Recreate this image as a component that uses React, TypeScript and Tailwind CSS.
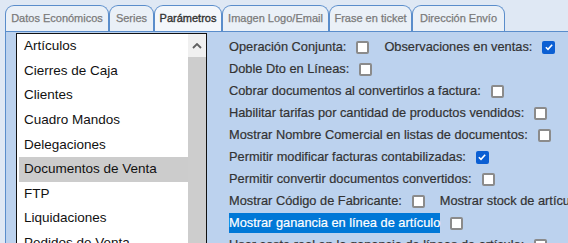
import React from "react";

const tabs = [
  { label: "Datos Económicos", w: "w-[104px]" },
  { label: "Series", w: "w-[45px]" },
  { label: "Parámetros", w: "w-[68px]", active: true },
  { label: "Imagen Logo/Email", w: "w-[107px]" },
  { label: "Frase en ticket", w: "w-[83px]" },
  { label: "Dirección Envío", w: "w-[93px]" },
];

const sections = [
  "Artículos",
  "Cierres de Caja",
  "Clientes",
  "Cuadro Mandos",
  "Delegaciones",
  "Documentos de Venta",
  "FTP",
  "Liquidaciones",
  "Pedidos de Venta",
  "Proveedores",
];

type Opt = { label: string; checked?: boolean; selected?: boolean };

const rows: Opt[][] = [
  [{ label: "Operación Conjunta:" }, { label: "Observaciones en ventas:", checked: true }],
  [{ label: "Doble Dto en Líneas:" }],
  [{ label: "Cobrar documentos al convertirlos a factura:" }],
  [{ label: "Habilitar tarifas por cantidad de productos vendidos:" }],
  [{ label: "Mostrar Nombre Comercial en listas de documentos:" }],
  [{ label: "Permitir modificar facturas contabilizadas:", checked: true }],
  [{ label: "Permitir convertir documentos convertidos:" }],
  [{ label: "Mostrar Código de Fabricante:" }, { label: "Mostrar stock de artículos en ventas:" }],
  [{ label: "Mostrar ganancia en línea de artículo", selected: true }],
  [{ label: "Usar coste real en la ganancia de líneas de artículo:" }],
];

const Checkbox = ({ checked }: { checked?: boolean }) =>
  checked ? (
    <span className="ml-[10px] flex h-[13px] w-[13px] shrink-0 items-center justify-center rounded-[2px] bg-[#0b5fd3]">
      <svg viewBox="0 0 12 12" className="h-[10px] w-[10px]">
        <path d="M2.2 6.3 L4.8 8.8 L9.8 3.2" fill="none" stroke="white" strokeWidth="1.9" />
      </svg>
    </span>
  ) : (
    <span className="ml-[10px] h-[13px] w-[13px] shrink-0 rounded-[2px] border-2 border-[#8b8b8b] bg-white" />
  );

export default function App() {
  return (
    <div
      className="h-[243px] w-[568px] overflow-hidden bg-[#dfe8f4] pl-[5px] pt-[5px]"
      style={{ fontFamily: '"Liberation Sans", Arial, sans-serif' }}
    >
      {/* tab strip */}
      <div className="flex h-[26px]">
        {tabs.map((t) => (
          <div
            key={t.label}
            className={
              "flex shrink-0 items-center justify-center whitespace-nowrap rounded-t-[9px] border border-b-0 border-[#5a8dcb] text-[11px] " +
              t.w +
              " " +
              (t.active ? "bg-[#f4f7fb] text-[#333]" : "bg-[#eaf0f7] text-[#7a7a7a]")
            }
            style={{ WebkitTextStroke: t.active ? "0.35px #333" : "0.25px #7a7a7a" }}
          >
            {t.label}
          </div>
        ))}
      </div>

      {/* panel */}
      <div className="flex h-[300px] border-l border-t border-[#5a8dcb] bg-[#bcd2ee]">
        {/* list box */}
        <div className="ml-[10px] mt-[1px] flex h-[300px] w-[191px] shrink-0 border border-[#111] bg-white">
          <div className="flex-1">
            {sections.map((s) => (
              <div
                key={s}
                className={
                  "flex h-[24.6px] items-center text-[13.5px] text-[#111] " +
                  (s === "Documentos de Venta" ? "ml-[2px] bg-[#cccccc] pl-[5px]" : "pl-[7px]")
                }
              >
                {s}
              </div>
            ))}
          </div>
          <div className="flex w-[18px] flex-col bg-[#cdcdcd]">
            <div className="flex h-[23px] items-center justify-center bg-[#f0f0f0]">
              <svg viewBox="0 0 10 6" className="h-[6px] w-[10px]">
                <path d="M1 5 L5 1 L9 5" fill="none" stroke="#606060" strokeWidth="1.8" />
              </svg>
            </div>
          </div>
        </div>

        {/* options */}
        <div className="ml-[22px] flex flex-col pt-[4px] text-[12.8px] text-[#333]">
          {rows.map((r, i) => (
            <div key={i} className="flex h-[22px] items-center whitespace-nowrap">
              {r.map((o, j) => (
                <div key={j} className={"flex items-center " + (j > 0 ? "ml-[15px]" : "")}>
                  <span
                    className={o.selected ? "bg-[#0078d7] text-white" : ""}
                    style={{ WebkitTextStroke: "0.2px currentColor" }}
                  >
                    {o.label}
                  </span>
                  <Checkbox checked={o.checked} />
                </div>
              ))}
            </div>
          ))}
        </div>
      </div>
    </div>
  );
}
